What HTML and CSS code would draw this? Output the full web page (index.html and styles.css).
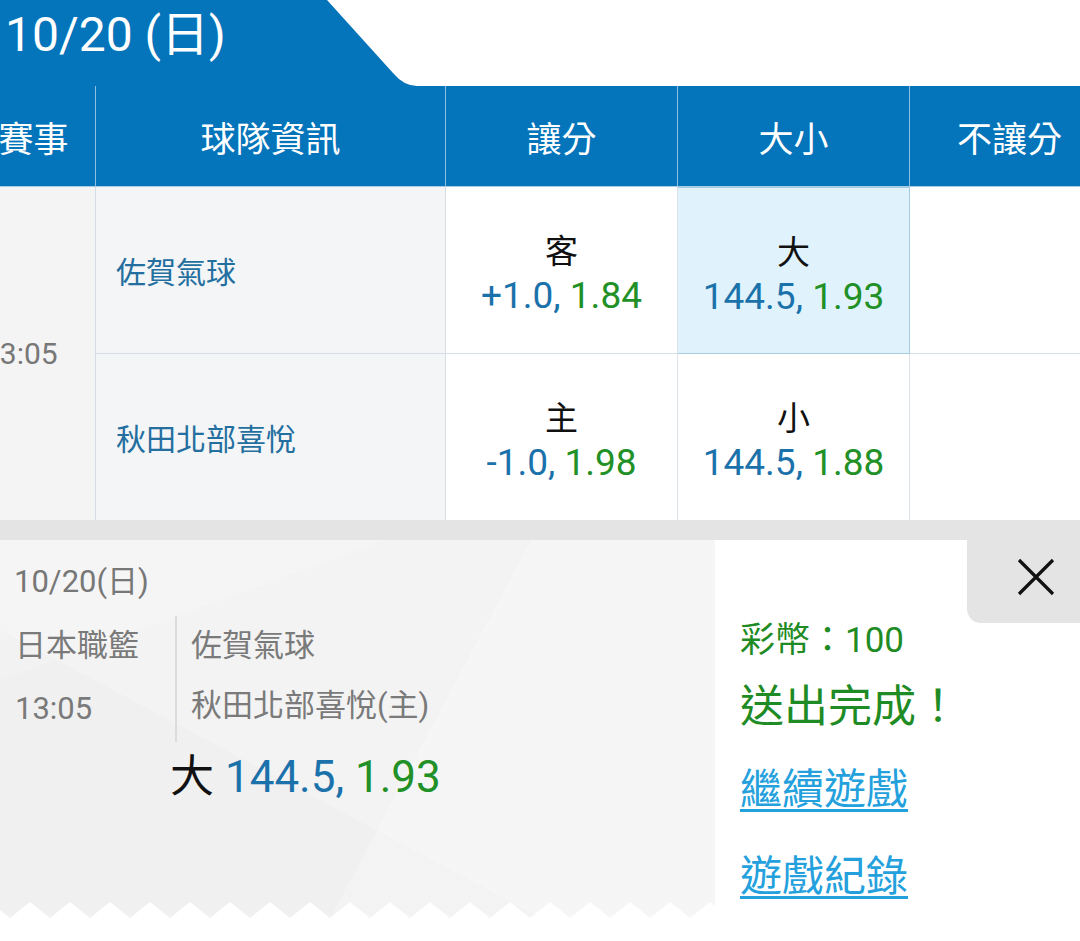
FILE: index.html
```html
<!DOCTYPE html>
<html lang="zh-Hant">
<head>
<meta charset="utf-8">
<title>投注完成</title>
<link rel="stylesheet" href="styles.css">
</head>
<body>
<div class="date-bar">
  <div class="date-tab">10/20 (日)</div>
  <svg class="date-slant" width="90" height="86" viewBox="0 0 90 86"><path d="M0 0 L66 73 Q77 86 90 86 L0 86 Z" fill="#0474bb"/></svg>
</div>

<div class="table-wrap">
  <div class="grid">
    <div class="th">賽事</div>
    <div class="th">球隊資訊</div>
    <div class="th">讓分</div>
    <div class="th">大小</div>
    <div class="th">不讓分</div>

    <div class="time-cell">13:05</div>
    <div class="team first">佐賀氣球</div>
    <div class="odds first">
      <div class="side">客</div>
      <div class="line"><span class="val">+1.0,</span> <span class="rate">1.84</span></div>
    </div>
    <div class="odds first sel">
      <div class="side">大</div>
      <div class="line"><span class="val">144.5,</span> <span class="rate">1.93</span></div>
    </div>
    <div class="odds first blank"></div>

    <div class="team">秋田北部喜悅</div>
    <div class="odds">
      <div class="side">主</div>
      <div class="line"><span class="val">-1.0,</span> <span class="rate">1.98</span></div>
    </div>
    <div class="odds">
      <div class="side">小</div>
      <div class="line"><span class="val">144.5,</span> <span class="rate">1.88</span></div>
    </div>
    <div class="odds blank"></div>
  </div>
</div>

<div class="band"></div>
<div class="panel">
  <div class="slip">
    <div class="slip-date">10/20(日)</div>
    <div class="slip-info">
      <div class="slip-league">
        <div class="slip-line">日本職籃</div>
        <div class="slip-line time">13:05</div>
      </div>
      <div class="slip-teams">
        <div class="slip-line">佐賀氣球</div>
        <div class="slip-line">秋田北部喜悅(主)</div>
      </div>
    </div>
    <div class="slip-bet"><span class="bet-side">大</span> <span class="val">144.5,</span> <span class="rate">1.93</span></div>
    <svg class="zigzag" width="715" height="16" viewBox="0 0 715 16">
      <defs>
        <pattern id="zz" width="40" height="16" x="10" y="0" patternUnits="userSpaceOnUse">
          <path d="M0 16 L20 0 L40 16 Z" fill="#ffffff"/>
        </pattern>
      </defs>
      <rect x="0" y="0" width="715" height="16" fill="url(#zz)"/>
    </svg>
  </div>
  <div class="result">
    <div class="close">
      <svg width="38" height="38" viewBox="0 0 38 38"><path d="M2 2 L36 36 M36 2 L2 36" stroke="#111" stroke-width="3.2" fill="none"/></svg>
    </div>
    <div class="coins">彩幣：100</div>
    <div class="done">送出完成！</div>
    <a class="link first-link" href="#">繼續遊戲</a>
    <a class="link" href="#">遊戲紀錄</a>
  </div>
</div>
</body>
</html>
```
FILE: styles.css
```css
* { box-sizing: border-box; }

body {
  margin: 0;
  width: 1080px;
  height: 941px;
  overflow: hidden;
  background: #ffffff;
  font-family: Roboto, "Noto Sans CJK TC", "Noto Sans CJK SC", sans-serif;
}

.date-bar {
  display: flex;
  height: 86px;
}

.date-tab {
  width: 327px;
  height: 86px;
  background: #0474bb;
  color: #ffffff;
  font-size: 48px;
  line-height: 70px;
  padding-left: 5px;
  white-space: nowrap;
}

.date-slant {
  display: block;
  flex: none;
}

.table-wrap {
  overflow: hidden;
  width: 1080px;
}

.grid {
  display: grid;
  grid-template-columns: 124px 350px 232px 232px 200px;
  grid-template-rows: 101px 167px 166px;
  margin-left: -28px;
  width: 1138px;
}

.th {
  background: #0474bb;
  color: #ffffff;
  font-size: 35px;
  display: flex;
  align-items: center;
  justify-content: center;
  border-right: 1px solid #8fc0e2;
  border-bottom: 1px solid #a9cde6;
}

.time-cell {
  grid-row: 2 / span 2;
  background: #f4f4f4;
  border-right: 1px solid #d6dde4;
  color: #777777;
  font-size: 30px;
  display: flex;
  align-items: center;
  padding-left: 11px;
}

.team {
  background: #f4f5f6;
  color: #236f9f;
  font-size: 30px;
  display: flex;
  align-items: center;
  padding-left: 20px;
  border-right: 1px solid #d6dde4;
}

.odds {
  background: #ffffff;
  border-right: 1px solid #dbe2e8;
  display: flex;
  flex-direction: column;
  align-items: center;
  justify-content: center;
  padding-top: 8px;
}

.first {
  border-bottom: 1px solid #d6dde4;
}

.odds.sel {
  background: #e0f3fc;
  border: 1px solid #a9cbe0;
  border-left: 0;
}

.side {
  font-size: 33px;
  line-height: 44px;
  color: #111111;
}

.line {
  font-size: 37px;
  line-height: 44px;
  white-space: nowrap;
}

.val { color: #1b72ab; }
.rate { color: #219026; }

.band {
  height: 20px;
  background: #e4e4e4;
}

.panel {
  display: flex;
  height: 378px;
}

.slip {
  width: 715px;
  flex: none;
  display: flex;
  flex-direction: column;
  background:
    linear-gradient(118deg, rgba(255,255,255,0) 58%, rgba(255,255,255,0.22) 58%),
    linear-gradient(28deg, rgba(0,0,0,0.01) 38%, rgba(0,0,0,0) 38%),
    linear-gradient(160deg, rgba(255,255,255,0.2) 22%, rgba(255,255,255,0) 22%),
    #f3f3f3;
}

.slip-date {
  margin-top: 22px;
  padding-left: 14px;
  font-size: 31px;
  line-height: 40px;
  color: #777777;
}

.slip-info {
  display: flex;
  margin-top: 14px;
}

.slip-league {
  width: 177px;
  padding-left: 15px;
  border-right: 2px solid #dcdcdc;
}

.slip-teams {
  padding-left: 14px;
}

.slip-line {
  font-size: 31px;
  line-height: 60px;
  color: #7a7a7a;
  white-space: nowrap;
}

.slip-line.time {
  line-height: 66px;
}

.slip-bet {
  margin-top: 10px;
  padding-left: 170px;
  font-size: 44px;
  line-height: 50px;
  white-space: nowrap;
}

.bet-side { color: #111111; }

.zigzag {
  display: block;
  margin-top: auto;
}

.result {
  flex: 1;
  position: relative;
  background: #ffffff;
  padding: 79px 0 0 25px;
  display: flex;
  flex-direction: column;
  align-items: flex-start;
}

.close {
  position: absolute;
  top: 0;
  right: 0;
  width: 113px;
  height: 83px;
  background: #e4e4e4;
  border-bottom-left-radius: 14px;
  padding: 18px 0 0 50px;
}

.close svg { display: block; }

.coins {
  font-size: 35px;
  line-height: 44px;
  color: #1f8b24;
}

.done {
  margin-top: 17px;
  font-size: 44px;
  line-height: 54px;
  color: #1f8b24;
}

.link {
  font-size: 42px;
  line-height: 54px;
  color: #24a1dd;
  text-decoration: underline;
  text-decoration-thickness: 3px;
  text-underline-offset: 5px;
}

.first-link { margin-top: 29px; }
.link + .link { margin-top: 33px; }
```
